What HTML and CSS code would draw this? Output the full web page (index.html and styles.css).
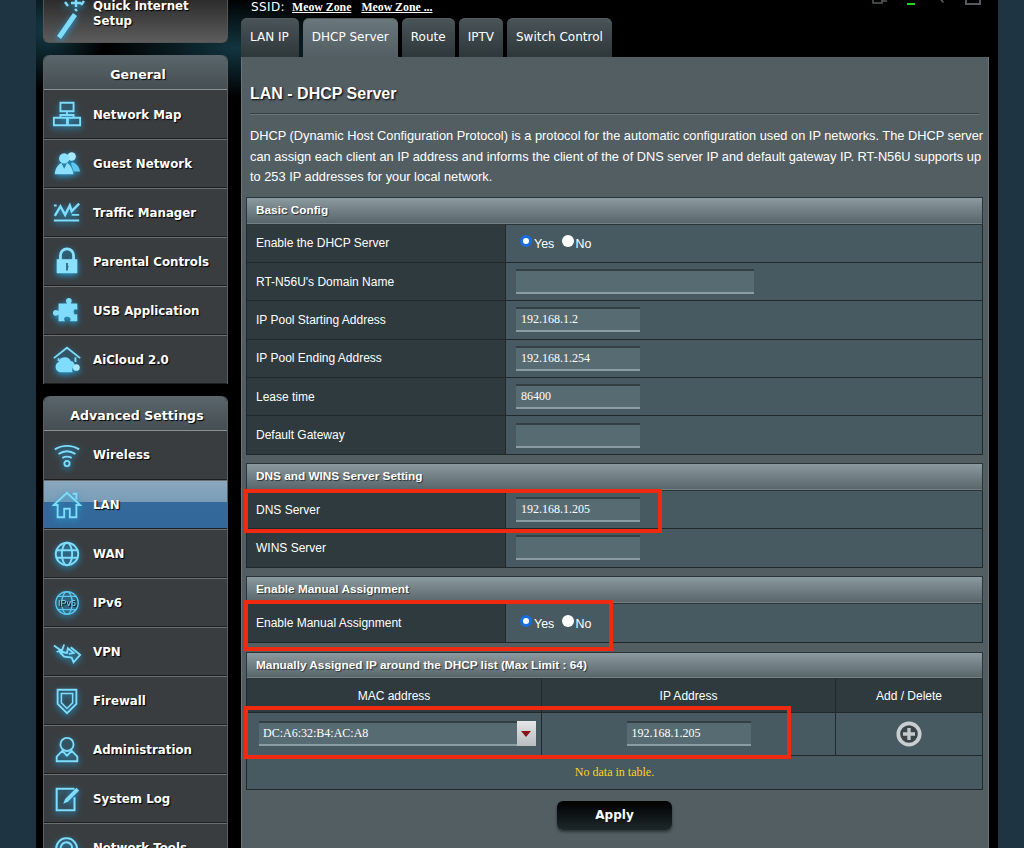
FILE: index.html
```html
<!DOCTYPE html>
<html lang="en">

<head>
    <meta charset="UTF-8">
    <meta name="viewport" content="width=device-width, initial-scale=1.0">
    <title>LAN - DHCP Server</title>
    <link rel="stylesheet" href="styles.css">
</head>

<body>
    <div class="frame">
        <div class="sidebar">
            <a class="quick-setup">
                <svg class="icon wand" viewBox="0 0 32 46"><path d="M3 40 19 17l4 3L7 43z" fill="#7fdcfa"/><path d="M22 2v9M17 7h10M11 6l3 4M30 5l-3 4M21 13l2 2" stroke="#7fdcfa" stroke-width="2.4" fill="none"/></svg>
                <span>Quick Internet<br>Setup</span>
            </a>

            <div class="menu-group general">
                <div class="menu-title">General</div>
                <a class="menu-item">
                    <svg class="icon" viewBox="0 0 32 32"><path d="M9 4h14v9H9zM2 20h14v8H2zM17 20h13v8H17zM16 13v4M9 20v-3h14v3" fill="none" stroke="#7fdcfa" stroke-width="2"/></svg>
                    <span>Network Map</span>
                </a>
                <a class="menu-item">
                    <svg class="icon" viewBox="0 0 32 32"><circle cx="21" cy="8" r="4.5" fill="#a9e8fc"/><circle cx="13" cy="10" r="5.5" fill="#8be0fb"/><path d="M22 14c4 1 7 5 8 10h-7l-3-9z" fill="#5cc7ee"/><path d="M3 27c0-6 4-11 7-12l3 6 3-6c3 1 6 6 7 12z" fill="#8be0fb"/></svg>
                    <span>Guest Network</span>
                </a>
                <a class="menu-item">
                    <svg class="icon" viewBox="0 0 32 32"><path d="M3 19 9 9l5 9 5-10 2 6 8-8" fill="none" stroke="#7fdcfa" stroke-width="2.6"/><path d="M2 8h3M21 18h8M2 24h27" stroke="#7fdcfa" stroke-width="2" fill="none"/></svg>
                    <span>Traffic Manager</span>
                </a>
                <a class="menu-item">
                    <svg class="icon" viewBox="0 0 32 32"><path d="M9 14V9a7 7 0 0 1 14 0v5" fill="none" stroke="#8be0fb" stroke-width="3"/><path d="M5 13h22v15H5z" fill="#8be0fb"/><path d="M15 17h2v3l1 1-1 1v3h-2z" fill="#2d6f8b"/></svg>
                    <span>Parental Controls</span>
                </a>
                <a class="menu-item">
                    <svg class="icon" viewBox="0 0 32 32"><path d="M13 8h3c-2-3-1-6 2-6s4 3 2 6h7v7c-3-2-4 0-4 2s2 4 4 2v8h-8c2-3 0-5-3-5s-4 2-2 5H7v-7c-3 2-6 1-6-2s3-4 6-2V8z" fill="#7fdcfa"/></svg>
                    <span>USB Application</span>
                </a>
                <a class="menu-item">
                    <svg class="icon" viewBox="0 0 32 32"><path d="M2 14 16 3l14 11" fill="none" stroke="#7fdcfa" stroke-width="2"/><path d="M7 14v3M25 13v5" stroke="#7fdcfa" stroke-width="2"/><path d="M8 29a6 6 0 0 1-1-11 7 7 0 0 1 13-1 5 5 0 0 1 4 5 6 6 0 0 0-2 7z" fill="#7fdcfa"/><circle cx="26" cy="24" r="3.6" fill="#a9e8fc"/></svg>
                    <span>AiCloud 2.0</span>
                </a>
            </div>

            <div class="menu-group">
                <div class="menu-title wide-title">Advanced Settings</div>
                <a class="menu-item">
                    <svg class="icon" viewBox="0 0 32 32"><path d="M3 10c8-5 18-5 26 0M7 15c6-4 12-4 18 0M11 19c4-2 6-2 10 0" fill="none" stroke="#7fdcfa" stroke-width="2"/><circle cx="16" cy="25" r="2.8" fill="none" stroke="#7fdcfa" stroke-width="2"/></svg>
                    <span>Wireless</span>
                </a>
                <a class="menu-item active">
                    <svg class="icon" viewBox="0 0 32 32"><path d="M2 16 16 3l14 13h-4v13h-7v-9h-6v9H6V16z" fill="none" stroke="#7fdcfa" stroke-width="2"/><path d="M22 4h4v6" fill="none" stroke="#7fdcfa" stroke-width="2"/></svg>
                    <span>LAN</span>
                </a>
                <a class="menu-item">
                    <svg class="icon" viewBox="0 0 32 32"><g fill="none" stroke="#7fdcfa" stroke-width="2"><circle cx="16" cy="16" r="12"/><ellipse cx="16" cy="16" rx="5.5" ry="12"/><path d="M4 12h24M4 20h24"/></g></svg>
                    <span>WAN</span>
                </a>
                <a class="menu-item">
                    <svg class="icon" viewBox="0 0 32 32"><g fill="none" stroke="#5cc7ee" stroke-width="1.4"><circle cx="16" cy="16" r="12"/><ellipse cx="16" cy="16" rx="5.5" ry="12"/><path d="M6 9h20M6 23h20"/></g><text x="16" y="19.5" class="ipv6-mark">IPv6</text></svg>
                    <span>IPv6</span>
                </a>
                <a class="menu-item">
                    <svg class="icon" viewBox="0 0 32 32"><path d="M2 9l10 7M5 16l7-3M13 8l-3 8 6 1 1-5 6 5-5 1M20 11l10 8-7 8-2-5-8-1-5-5" fill="none" stroke="#7fdcfa" stroke-width="2"/></svg>
                    <span>VPN</span>
                </a>
                <a class="menu-item">
                    <svg class="icon" viewBox="0 0 32 32"><path d="M6 4h20v15l-10 10L6 19z" fill="none" stroke="#7fdcfa" stroke-width="2"/><path d="M10 8h12v10l-6 6-6-6z" fill="none" stroke="#7fdcfa" stroke-width="1.6"/></svg>
                    <span>Firewall</span>
                </a>
                <a class="menu-item">
                    <svg class="icon" viewBox="0 0 32 32"><circle cx="16" cy="10" r="7" fill="none" stroke="#7fdcfa" stroke-width="2"/><path d="M11 17 5 23v5h22v-5l-6-6-5 5z" fill="none" stroke="#7fdcfa" stroke-width="2"/></svg>
                    <span>Administration</span>
                </a>
                <a class="menu-item">
                    <svg class="icon" viewBox="0 0 32 32"><path d="M24 14v14H5V5h19" fill="none" stroke="#7fdcfa" stroke-width="2.2"/><path d="M12 21l2-5L26 4l3 3-12 12z" fill="#7fdcfa"/></svg>
                    <span>System Log</span>
                </a>
                <a class="menu-item">
                    <svg class="icon" viewBox="0 0 32 32"><path d="M6 22A11 11 0 1 1 26 20M11 20a6 6 0 1 1 10-2" fill="none" stroke="#7fdcfa" stroke-width="2.2"/></svg>
                    <span>Network Tools</span>
                </a>
            </div>
        </div>

        <div class="main">
            <div class="topbar">
                <span class="ssid">SSID:</span>
                <a class="ssid-link">Meow Zone</a>
                <a class="ssid-link">Meow Zone ...</a>
                <div class="status-icons">
                    <svg viewBox="0 0 16 8"><path d="M1 0v5h9V0M10 3h5" fill="none" stroke="#55595b" stroke-width="1.5"/></svg>
                    <svg viewBox="0 0 16 8"><path d="M2 0v2h12V0M4 5h8v2H4z" fill="#22d81e"/></svg>
                    <svg viewBox="0 0 16 8"><path d="M4 0l5 5 1-1-3-4z" fill="#55595b"/></svg>
                    <svg viewBox="0 0 16 8"><path d="M1 0v6h14V0" fill="none" stroke="#55595b" stroke-width="2"/></svg>
                </div>
            </div>

            <div class="tabs">
                <a class="tab">LAN IP</a>
                <a class="tab active">DHCP Server</a>
                <a class="tab">Route</a>
                <a class="tab">IPTV</a>
                <a class="tab">Switch Control</a>
            </div>

            <div class="panel">
                <h1>LAN - DHCP Server</h1>
                <p class="intro">DHCP (Dynamic Host Configuration Protocol) is a protocol for the automatic configuration used on IP networks. The DHCP server can assign each client an IP address and informs the client of the of DNS server IP and default gateway IP. RT-N56U supports up to 253 IP addresses for your local network.</p>

                <table class="config basic">
                    <colgroup><col class="col-label"><col></colgroup>
                    <tr><th colspan="2">Basic Config</th></tr>
                    <tr>
                        <td class="label">Enable the DHCP Server</td>
                        <td>
                            <label class="radio"><input type="radio" name="dhcp" checked>Yes</label>
                            <label class="radio"><input type="radio" name="dhcp">No</label>
                        </td>
                    </tr>
                    <tr>
                        <td class="label">RT-N56U's Domain Name</td>
                        <td><input class="field wide" type="text"></td>
                    </tr>
                    <tr>
                        <td class="label">IP Pool Starting Address</td>
                        <td><input class="field" type="text" value="192.168.1.2"></td>
                    </tr>
                    <tr>
                        <td class="label">IP Pool Ending Address</td>
                        <td><input class="field" type="text" value="192.168.1.254"></td>
                    </tr>
                    <tr>
                        <td class="label">Lease time</td>
                        <td><input class="field" type="text" value="86400"></td>
                    </tr>
                    <tr>
                        <td class="label">Default Gateway</td>
                        <td><input class="field" type="text"></td>
                    </tr>
                </table>

                <table class="config dns">
                    <colgroup><col class="col-label"><col></colgroup>
                    <tr><th colspan="2">DNS and WINS Server Setting</th></tr>
                    <tr>
                        <td class="label">DNS Server</td>
                        <td><input class="field" type="text" value="192.168.1.205"></td>
                    </tr>
                    <tr>
                        <td class="label">WINS Server</td>
                        <td><input class="field" type="text"></td>
                    </tr>
                </table>

                <table class="config manual">
                    <colgroup><col class="col-label"><col></colgroup>
                    <tr><th colspan="2">Enable Manual Assignment</th></tr>
                    <tr>
                        <td class="label">Enable Manual Assignment</td>
                        <td>
                            <label class="radio"><input type="radio" name="manual" checked>Yes</label>
                            <label class="radio"><input type="radio" name="manual">No</label>
                        </td>
                    </tr>
                </table>

                <table class="config assigned">
                    <colgroup>
                        <col class="col-mac">
                        <col class="col-ip">
                        <col>
                    </colgroup>
                    <tr class="title-row"><th colspan="3">Manually Assigned IP around the DHCP list (Max Limit : 64)</th></tr>
                    <tr class="head-row">
                        <td>MAC address</td>
                        <td>IP Address</td>
                        <td>Add / Delete</td>
                    </tr>
                    <tr class="entry-row">
                        <td>
                            <div class="mac-select">
                                <input class="field mac" type="text" value="DC:A6:32:B4:AC:A8">
                                <span class="arrow"></span>
                            </div>
                        </td>
                        <td><input class="field" type="text" value="192.168.1.205"></td>
                        <td>
                            <svg class="add-btn" viewBox="0 0 28 28">
                                <circle cx="14" cy="14" r="11.5" fill="#3b4448" stroke="#c9ced0" stroke-width="4"/>
                                <path d="M14 7.5v13M7.5 14h13" stroke="#c4cacc" stroke-width="3.6"/>
                            </svg>
                        </td>
                    </tr>
                    <tr class="empty-row"><td colspan="3">No data in table.</td></tr>
                </table>

                <div class="actions"><button type="button" class="apply">Apply</button></div>

                <!-- red marks drawn over the screenshot -->
                <div class="mark mark-dns"></div>
                <div class="mark mark-manual"></div>
                <div class="mark mark-entry"></div>
            </div>
        </div>
    </div>
</body>

</html>
```

FILE: styles.css
```css
html,
body {
    height: 848px;
    margin: 0;
    padding: 0;
    overflow: hidden;
}

body {
    background: #1f3442;
    font-family: "Liberation Sans", Arial, sans-serif;
    color: #fff;
}

a {
    color: inherit;
}

.frame {
    display: flex;
    height: 848px;
    margin: 0 26px 0 36px;
    background:
        radial-gradient(ellipse 130px 50px at 200px 48px, #123540, transparent),
        radial-gradient(ellipse 60px 60px at 10px 30px, #143a45, transparent),
        #000;
    overflow: hidden;
}

/* left menu */
.sidebar {
    flex: none;
    width: 185px;
    margin: 0 13px 0 7px;
    font-family: "DejaVu Sans", Verdana, sans-serif;
    font-weight: bold;
    font-size: 11.8px;
    text-shadow: 1px 1px 1px #000;
}

.quick-setup {
    display: flex;
    align-items: flex-end;
    height: 43px;
    box-sizing: border-box;
    padding: 0 0 15px 10px;
    gap: 7px;
    line-height: 15px;
    background: linear-gradient(#2c2c2c, #5c5c5c);
    border: 1px solid #555;
    border-top: none;
    border-radius: 0 0 6px 6px;
    overflow: hidden;
}

.quick-setup .wand {
    width: 32px;
    height: 46px;
    margin-bottom: -15px;
    flex: none;
}

.quick-setup span {
    margin-bottom: -2px;
}

.menu-group {
    margin-top: 12px;
    border-left: 1px solid #5a5f62;
    border-right: 1px solid #5a5f62;
    border-radius: 6px 6px 0 0;
}

.menu-title {
    height: 35px;
    box-sizing: border-box;
    padding-left: 5px;
    line-height: 39px;
    text-align: center;
    font-size: 12.6px;
    background: linear-gradient(#5a666b, #454e52);
    border-radius: 6px 6px 0 0;
    border-bottom: 1px solid #8a9093;
}

.menu-title.wide-title {
    padding-left: 3px;
}

.menu-item {
    display: flex;
    align-items: center;
    gap: 11px;
    height: 49px;
    box-sizing: border-box;
    padding-left: 8px;
    background: #393d40;
    border-top: 1px solid #6a6f72;
    border-bottom: 1px solid #1c1e20;
}

.menu-title + .menu-item {
    border-top: none;
}

.general .menu-item span {
    margin-top: 1px;
}

.menu-item.active {
    background: linear-gradient(#8aa8bf, #7a9cb6 45%, #336a9b 45%, #33689a);
}

.icon {
    flex: none;
    width: 30px;
    height: 30px;
    filter: drop-shadow(0 2px 3px #1f9fd8);
}

.ipv6-mark {
    font-family: "Liberation Sans", Arial, sans-serif;
    font-size: 9.5px;
    font-weight: normal;
    text-anchor: middle;
    fill: #7fdcfa;
}

/* right side */
.main {
    flex: none;
    width: 748px;
}

.topbar {
    display: flex;
    align-items: center;
    gap: 10px;
    height: 18px;
    padding: 0 0 4px 10px;
    box-sizing: border-box;
    font-size: 12px;
    line-height: 14px;
}

.ssid {
    font-family: "DejaVu Sans", Verdana, sans-serif;
    letter-spacing: 0.4px;
    margin-right: -3px;
}

.ssid-link {
    font-family: "Liberation Serif", "Times New Roman", serif;
    font-weight: bold;
    font-size: 11.8px;
    text-decoration: underline;
}

.status-icons {
    display: flex;
    align-self: flex-start;
    gap: 15px;
    margin-left: auto;
    margin-right: 8px;
    height: 8px;
    margin-top: -2px;
}

.status-icons svg {
    width: 16px;
    height: 8px;
}

.tabs {
    display: flex;
    gap: 4px;
    height: 39px;
}

.tab {
    padding: 0 9px;
    line-height: 39px;
    font-family: "DejaVu Sans", Verdana, sans-serif;
    font-size: 12px;
    background: linear-gradient(#4a5559, #2e373a);
    border-radius: 6px 6px 0 0;
    box-shadow: inset 0 1px 0 #56585a;
}

.tab:first-child {
    padding-right: 10px;
}

.tab.active {
    background: linear-gradient(#6a777c, #525e62);
}

.panel {
    position: relative;
    height: 791px;
    box-sizing: border-box;
    padding: 27px 5px 0 4px;
    background: #525e62;
    border-left: 1px solid #6b7579;
    border-right: 1px solid #6b7579;
}

h1 {
    margin: 0 4px;
    padding: 0 0 9px 0;
    height: 30px;
    box-sizing: border-box;
    font-size: 16px;
    line-height: 20px;
    text-shadow: 1px 1px 2px #000;
    border-bottom: 1px solid #363f43;
    box-shadow: 0 1px 0 #6b7579;
}

.intro {
    margin: 12px -5px 9px 4px;
    font-size: 12.8px;
    line-height: 20.5px;
}

/* config tables */
.config {
    width: 737px;
    table-layout: fixed;
    border-collapse: collapse;
    margin-bottom: 8px;
    font-size: 12px;
}

.col-label {
    width: 259px;
}

.config th {
    height: 27px;
    padding: 0 0 1px 9px;
    box-sizing: border-box;
    text-align: left;
    font-size: 11.8px;
    text-shadow: 1px 1px 1px #2a3336;
    background: linear-gradient(#8c9ba1, #586569);
    border: 1px solid #2b3437;
}

.config td {
    height: 38.4px;
    box-sizing: border-box;
    padding: 0 0 0 10px;
    background: #475961;
    border: 1px solid #20282b;
}

.config td.label {
    padding-left: 9px;
    background: #2f3a3e;
}

.config.manual {
    margin-bottom: 9px;
}

.config.manual td {
    height: 39px;
}

.field {
    display: block;
    width: 124px;
    height: 25px;
    box-sizing: border-box;
    padding: 0 5px;
    font-family: "Liberation Serif", "Times New Roman", serif;
    font-size: 12px;
    color: #fff;
    background: #576b73;
    border: none;
    border-top: 2px solid #343f43;
    border-bottom: 2px solid #8b9ca3;
    outline: none;
}

.field.wide {
    width: 238px;
}

.radio {
    display: inline-flex;
    align-items: flex-start;
    gap: 2px;
    margin-right: 3px;
    padding-top: 4px;
    line-height: 14px;
    font-size: 12.4px;
}

.radio input {
    appearance: none;
    width: 12px;
    height: 12px;
    margin: 1px 0 0 1px;
    background: #fff;
    border-radius: 50%;
    flex: none;
    position: relative;
    top: -3px;
}

.radio:first-child input {
    margin-left: 4px;
}

.radio input:checked {
    background: #fff;
    border: 3px solid #1a6de0;
}

/* manual assignment table */
.col-mac {
    width: 295px;
}

.col-ip {
    width: 294px;
}

.assigned {
    margin-bottom: 11px;
}

.assigned .title-row th {
    height: 26px;
}

.assigned .head-row td {
    height: 34px;
    padding: 1px 0 0;
    text-align: center;
    background: #2f3a3e;
}

.assigned .entry-row td {
    height: 43px;
    padding: 0;
    text-align: center;
}

.assigned .entry-row .field {
    margin: 0 auto;
}

.mac-select {
    display: flex;
    width: 277px;
    margin-left: 12px;
}

.assigned .entry-row .field.mac {
    flex: 1;
    margin: 0;
    width: auto;
    padding: 0 4px;
}

.arrow {
    position: relative;
    width: 19px;
    height: 25px;
    background: linear-gradient(#e4e6e7, #b9bdbf);
}

.arrow::after {
    content: "";
    position: absolute;
    left: 4px;
    top: 10px;
    border-left: 5px solid transparent;
    border-right: 5px solid transparent;
    border-top: 6px solid #8b1216;
}

.add-btn {
    display: block;
    width: 26px;
    height: 26px;
    margin: 0 auto;
}

.assigned .empty-row td {
    height: 34px;
    padding: 0;
    text-align: center;
    font-family: "Liberation Serif", "Times New Roman", serif;
    font-size: 12px;
    color: #ffd21f;
}

.actions {
    text-align: center;
}

.apply {
    width: 115px;
    height: 29px;
    padding: 0;
    font-family: "DejaVu Sans", Verdana, sans-serif;
    font-weight: bold;
    font-size: 12px;
    color: #fff;
    background: linear-gradient(#000, #1d282c);
    border: none;
    border-radius: 6px;
    box-shadow: 0 2px 3px rgba(0, 0, 0, 0.45);
}

/* red marks */
.mark {
    position: absolute;
    box-sizing: border-box;
    border: 4px solid #f02a10;
}

.mark-dns {
    left: 2px;
    top: 432px;
    width: 418px;
    height: 44px;
}

.mark-manual {
    left: 2px;
    top: 543px;
    width: 369px;
    height: 51px;
}

.mark-entry {
    left: 2px;
    top: 649px;
    width: 547px;
    height: 53px;
}
```
